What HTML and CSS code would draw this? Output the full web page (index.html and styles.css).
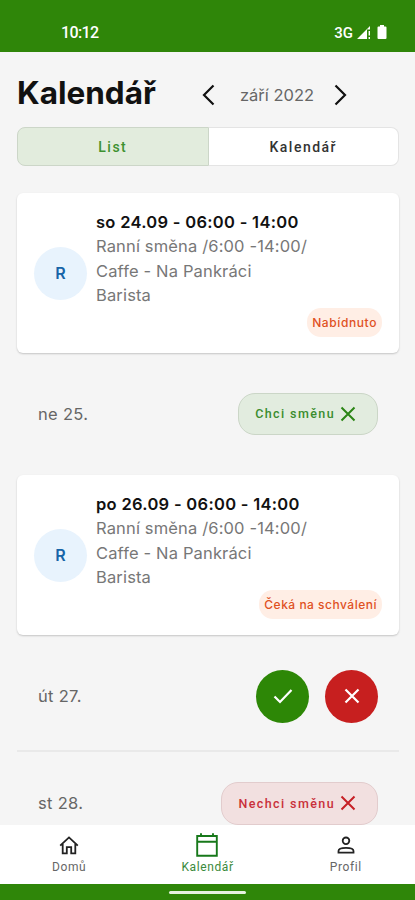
FILE: index.html
```html
<!DOCTYPE html>
<html lang="cs">
<head>
    <meta charset="UTF-8">
    <meta name="viewport" content="width=device-width, initial-scale=1.0">
    <title>Kalendář</title>
    <link rel="stylesheet" href="styles.css">
</head>
<body>
    <div class="app">
        <!-- Status bar -->
        <div class="status-bar">
            <span class="time">10:12</span>
            <div class="status-icons">
                <span>3G</span>
                <svg class="signal" width="14" height="14" viewBox="0 0 14 14">
                    <path d="M0 14 L13 1 V4.5 H10 V14 Z" fill="#fff"/>
                    <path d="M11.6 6 H13 V10.5 H11.6 Z M11.6 12 H13 V14 H11.6 Z" fill="#fff"/>
                </svg>
                <svg class="battery" width="10" height="14" viewBox="0 0 10 14">
                    <path d="M3 0 H7 V1.5 H8.5 Q9.5 1.5 9.5 2.5 V13 Q9.5 14 8.5 14 H1.5 Q.5 14 .5 13 V2.5 Q.5 1.5 1.5 1.5 H3 Z" fill="#fff"/>
                </svg>
            </div>
        </div>

        <main class="content">
            <div class="header">
                <h1>Kalendář</h1>
                <div class="month">
                    <svg width="13" height="22" viewBox="0 0 13 22"><path d="M11.5 1.5 L2 11 L11.5 20.5"/></svg>
                    <span>září 2022</span>
                    <svg width="13" height="22" viewBox="0 0 13 22"><path d="M1.5 1.5 L11 11 L1.5 20.5"/></svg>
                </div>
            </div>

            <div class="tabs">
                <button class="tab active">List</button>
                <button class="tab">Kalendář</button>
            </div>

            <div class="card">
                <div class="avatar">R</div>
                <div class="shift">
                    <b>so 24.09 - 06:00 - 14:00</b>
                    <p>Ranní směna /6:00 -14:00/</p>
                    <p>Caffe - Na Pankráci</p>
                    <p>Barista</p>
                </div>
                <span class="badge">Nabídnuto</span>
            </div>

            <div class="day">
                <span class="date">ne 25.</span>
                <button class="chip want">
                    <span>Chci směnu</span>
                    <svg width="16" height="16" viewBox="0 0 16 16"><path d="M1.5 1.5 L14.5 14.5 M14.5 1.5 L1.5 14.5"/></svg>
                </button>
            </div>

            <div class="card">
                <div class="avatar">R</div>
                <div class="shift">
                    <b>po 26.09 - 06:00 - 14:00</b>
                    <p>Ranní směna /6:00 -14:00/</p>
                    <p>Caffe - Na Pankráci</p>
                    <p>Barista</p>
                </div>
                <span class="badge waiting">Čeká na schválení</span>
            </div>

            <div class="day choice">
                <span class="date">út 27.</span>
                <div class="actions">
                    <button class="round yes"><svg width="20" height="16" viewBox="0 0 20 16"><path d="M1.5 8.5 L7 14 L18.5 2"/></svg></button>
                    <button class="round no"><svg width="16" height="16" viewBox="0 0 16 16"><path d="M1.5 1.5 L14.5 14.5 M14.5 1.5 L1.5 14.5"/></svg></button>
                </div>
            </div>

            <div class="day last">
                <span class="date">st 28.</span>
                <button class="chip reject">
                    <span>Nechci směnu</span>
                    <svg width="16" height="16" viewBox="0 0 16 16"><path d="M1.5 1.5 L14.5 14.5 M14.5 1.5 L1.5 14.5"/></svg>
                </button>
            </div>
        </main>

        <!-- Bottom navigation -->
        <nav class="bottom-nav">
            <a class="nav-item">
                <svg width="20" height="24" viewBox="0 0 20 24" stroke="#222" stroke-width="1.8"><path d="M1.2 12.7 L10 4.4 L18.8 12.7 M3.7 11 V20.4 H7.8 V14.2 H12.2 V20.4 H16.3 V11"/></svg>
                <span>Domů</span>
            </a>
            <a class="nav-item active">
                <svg width="22" height="24" viewBox="0 0 22 24" stroke="#17781a" stroke-width="1.9"><path d="M1.2 3 H20.8 V22.8 H1.2 Z M1.2 8.8 H20.8 M5 0.3 V3 M17 0.3 V3"/></svg>
                <span>Kalendář</span>
            </a>
            <a class="nav-item">
                <svg width="18" height="24" viewBox="0 0 18 24" stroke="#222" stroke-width="1.8"><circle cx="9" cy="7.8" r="3.3"/><path d="M1.5 19.6 V18 C1.5 13.9 16.5 13.9 16.5 18 V19.6 Z"/></svg>
                <span>Profil</span>
            </a>
        </nav>
        <div class="gesture-bar"><div class="handle"></div></div>
    </div>
</body>
</html>
```
FILE: styles.css
```css
* {
    box-sizing: border-box;
}

body {
    margin: 0;
    font-family: 'Inter', sans-serif;
    background: #f5f5f5;
    color: #666;
}

.app {
    display: flex;
    flex-direction: column;
    height: 900px;
    overflow: hidden;
}

svg {
    display: block;
    fill: none;
}

button {
    font-family: 'Roboto', sans-serif;
    cursor: pointer;
}

/* Status bar */
.status-bar {
    display: flex;
    justify-content: space-between;
    flex: none;
    height: 52px;
    padding: 23px 28px 0 61px;
    background: #2f8609;
    color: #fff;
    font: 500 16px/20px 'Roboto', sans-serif;
}

.time {
    letter-spacing: -0.6px;
}

.status-icons {
    display: flex;
    font-size: 15px;
}

.signal {
    margin: 2px 6px 0 4px;
}

.battery {
    margin-top: 2px;
}

.content {
    flex: 1;
    min-height: 0;
    overflow: hidden;
    padding: 0 16px 0 17px;
}

/* Title and month switcher */
.header {
    display: flex;
    align-items: center;
    height: 75px;
    padding-top: 7px;
}

h1 {
    width: 185px;
    margin: 0;
    font-size: 31.5px;
    line-height: 40px;
    color: #111;
}

.month {
    display: flex;
    align-items: center;
    width: 145px;
    padding-top: 4px;
    font-size: 16.5px;
}

.month span {
    flex: 1;
    padding-left: 5px;
    text-align: center;
}

.month path {
    stroke: #111;
    stroke-width: 2.2;
}

.tabs {
    display: flex;
    height: 39px;
    margin-bottom: 27px;
}

.tab {
    flex: 1;
    border: 1px solid #e4e4e4;
    border-left: 0;
    border-radius: 0 8px 8px 0;
    background: #fff;
    color: #333;
    font-size: 14px;
    font-weight: 500;
    letter-spacing: 1.5px;
}

.tab.active {
    border: 1px solid #ccd6c8;
    border-radius: 8px 0 0 8px;
    background: #e2ecdd;
    color: #3d9130;
}

/* Shift card */
.card {
    position: relative;
    display: flex;
    height: 159.5px;
    padding: 17px;
    border-radius: 6px;
    background: #fff;
    box-shadow: 0 1px 2px rgba(0, 0, 0, 0.2);
}

.avatar {
    width: 53px;
    height: 53px;
    margin: 37px 9px 0 0;
    border-radius: 50%;
    background: #e8f3fd;
    color: #1764a8;
    font-size: 16px;
    font-weight: 600;
    line-height: 53px;
    text-align: center;
}

.shift {
    font-size: 16.5px;
    line-height: 24.3px;
    letter-spacing: 0.15px;
    color: #777;
}

.shift b {
    font-weight: 600;
    letter-spacing: 0.3px;
    color: #111;
}

.shift p {
    margin: 0;
}

.badge {
    position: absolute;
    right: 17px;
    bottom: 16px;
    padding: 0 5px;
    border-radius: 14px;
    background: #ffeee5;
    color: #e0511f;
    font-size: 12px;
    font-weight: 500;
    line-height: 29px;
    letter-spacing: 0.6px;
}

.waiting {
    letter-spacing: 0.5px;
}

/* Days without a shift */
.day {
    display: flex;
    align-items: center;
    justify-content: space-between;
    height: 122.5px;
    padding: 0 21px;
    font-size: 16.5px;
    letter-spacing: 0.3px;
}

.choice {
    height: 117px;
    padding-top: 8px;
    border-bottom: 2px solid #e9e9e9;
}

.last {
    height: 103px;
}

.chip {
    display: flex;
    align-items: center;
    gap: 5px;
    height: 42px;
    padding: 0 21px 0 16px;
    border: 1px solid #cbd6c7;
    border-radius: 17px;
    background: #e2ecdf;
    color: #3a8c2e;
    font-size: 12.5px;
    font-weight: 500;
    letter-spacing: 1.4px;
}

.chip svg {
    stroke: #2b8515;
    stroke-width: 2;
}

.reject {
    height: 43px;
    border-color: #e2cccd;
    background: #f2e0e0;
    color: #c9303a;
}

.reject svg {
    stroke: #c62026;
}

.actions {
    display: flex;
    gap: 16px;
}

.round {
    display: grid;
    place-items: center;
    width: 53px;
    height: 53px;
    padding: 0;
    border: none;
    border-radius: 50%;
    stroke: #fff;
    stroke-width: 2.2;
}

.yes {
    background: #2d8706;
}

.no {
    background: #c71f1f;
}

/* Bottom navigation */
.bottom-nav {
    display: flex;
    justify-content: space-between;
    flex: none;
    height: 59px;
    background: #fff;
    font: 12px/14px 'Roboto', sans-serif;
    letter-spacing: 0.6px;
}

.nav-item {
    display: flex;
    flex-direction: column;
    align-items: center;
    gap: 3px;
    width: 139px;
    padding-top: 8px;
}

.nav-item.active {
    color: #3a8a3b;
}

.gesture-bar {
    flex: none;
    height: 16px;
    padding-top: 7px;
    background: #2f8609;
}

.handle {
    width: 77px;
    height: 3px;
    margin: 0 auto;
    border-radius: 2px;
    background: #e6f2e1;
}
```
